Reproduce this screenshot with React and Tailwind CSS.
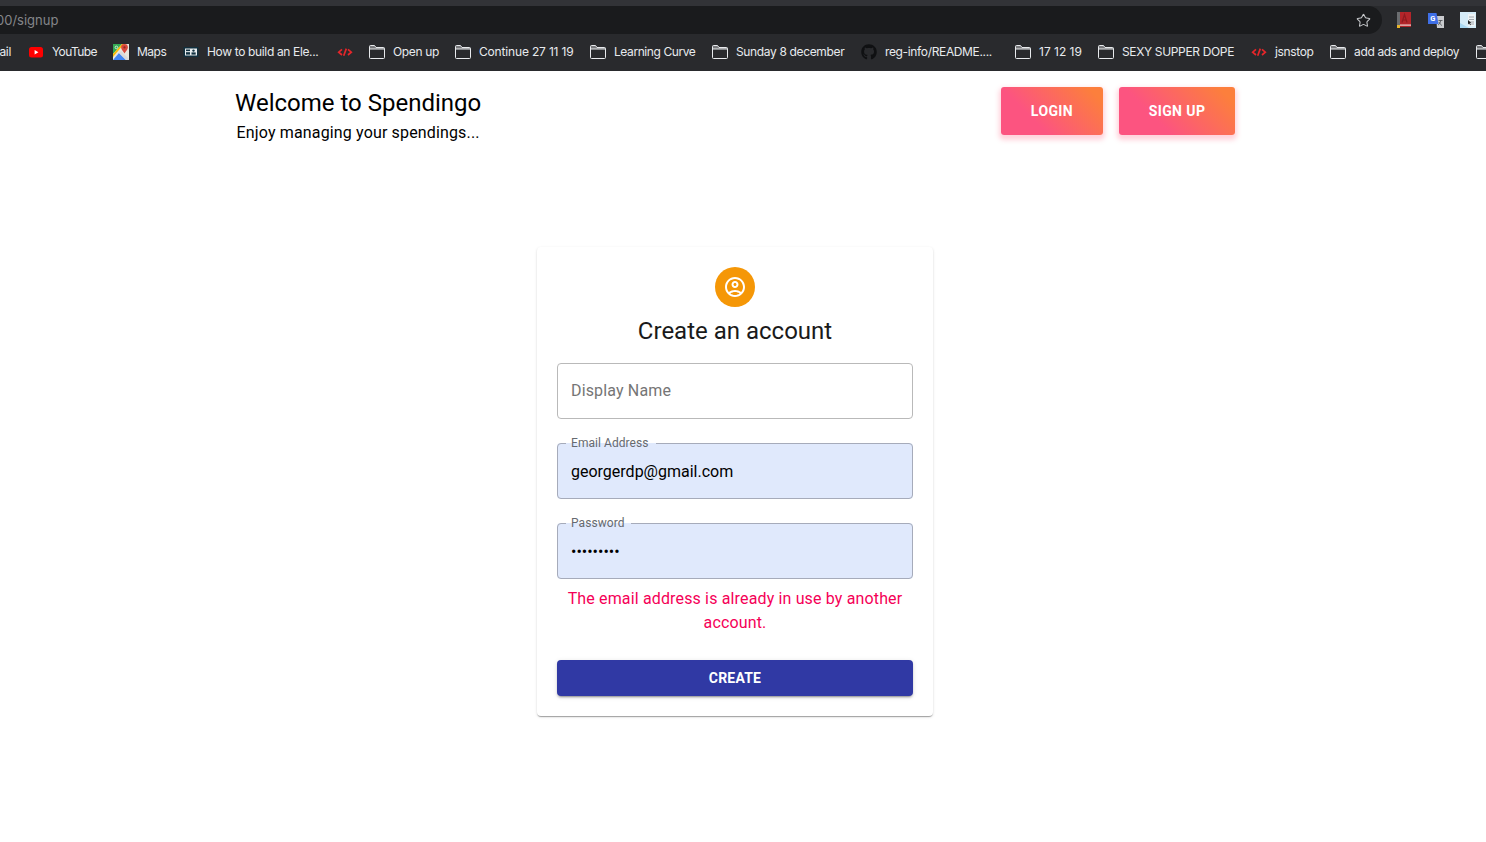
import React from 'react';
import { Star } from 'lucide-react';
import { FaGithub } from 'react-icons/fa';

const FolderIcon = () => (
  <svg width="16" height="14" viewBox="0 0 16 14" className="shrink-0">
    <path d="M.5 4V1.500a1 1 0 0 1 1-1h4l1.500 2h7.500a1 1 0 0 1 1 1V4z" fill="#77787b" />
    <path d="M.5 1.500a1 1 0 0 1 1-1h4l1.500 2h7.500a1 1 0 0 1 1 1v9a1 1 0 0 1-1 1h-13a1 1 0 0 1-1-1zM.5 4h15" fill="none" stroke="#e8eaed" />
  </svg>
);

const CodeIcon = () => (
  <svg width="16" height="16" viewBox="0 0 16 16" fill="none" stroke="#e5262a" strokeWidth="1.7" className="shrink-0">
    <path d="M5 5.300 1.700 8.200 5 11M11 5.300l3.300 2.900L11 11M9.300 4.600 6.700 11.800" />
  </svg>
);

const YoutubeIcon = () => (
  <svg width="16" height="16" viewBox="0 0 16 16" className="shrink-0">
    <rect x="1" y="3" width="14" height="10.500" rx="2.500" fill="#f00" />
    <path d="M6.600 6v4.400L10.400 8.200z" fill="#fff" />
  </svg>
);

const MapsIcon = () => (
  <svg width="16" height="16" viewBox="0 0 16 16" className="shrink-0">
    <rect width="16" height="16" fill="#e8e6df" />
    <path d="M0 0h9L0 10z" fill="#34a853" />
    <path d="M0 10 9 0h2L0 13z" fill="#fbbc04" />
    <path d="M0 16 6 9l7 7z" fill="#4285f4" />
    <path d="M6 9l2-2 8 8v1h-3z" fill="#d9d9d9" />
    <path d="M11.500 0a3.400 3.400 0 0 1 3.400 3.400c0 2.200-2.400 3.600-3.400 6.200-1-2.600-3.400-4-3.400-6.200A3.400 3.400 0 0 1 11.500 0z" fill="#d9483b" />
    <circle cx="11.500" cy="3.400" r="1.100" fill="#8f2a22" />
    <circle cx="3.400" cy="3.400" r="1.300" fill="none" stroke="#fff" strokeWidth=".7" />
  </svg>
);

const ArticleIcon = () => (
  <svg width="16" height="16" viewBox="0 0 16 16" className="shrink-0">
    <rect x="0.500" y="3" width="15" height="10" fill="#12303f" />
    <rect x="2" y="4.500" width="12" height="7" fill="#e9eef0" />
    <rect x="3" y="5.500" width="4" height="1.600" fill="#12303f" />
    <rect x="3" y="8.200" width="4" height="2.400" fill="#12303f" />
    <circle cx="10.500" cy="6.600" r="1.200" fill="#12303f" />
    <rect x="8.500" y="8.400" width="4.200" height="2.200" fill="#12303f" />
  </svg>
);

const GithubIcon = () => <FaGithub className="shrink-0 text-[16px] text-[#0f1012]" />;

const bookmarks = [
  { icon: <YoutubeIcon />, label: 'YouTube', w: 'w-[45px] tracking-[-0.6px]' },
  { icon: <MapsIcon />, label: 'Maps', w: 'w-[30px] tracking-[-0.5px]' },
  { icon: <ArticleIcon />, label: 'How to build an Ele...', w: 'w-[114px]' },
  { icon: <CodeIcon /> },
  { icon: <FolderIcon />, label: 'Open up', w: 'w-[46px]' },
  { icon: <FolderIcon />, label: 'Continue 27 11 19', w: 'w-[95px] tracking-[-0.17px]' },
  { icon: <FolderIcon />, label: 'Learning Curve', w: 'w-[82px] tracking-[-0.42px]' },
  { icon: <FolderIcon />, label: 'Sunday 8 december', w: 'w-[109px]' },
  { icon: <GithubIcon />, label: 'reg-info/README....', w: 'w-[114px]' },
  { icon: <FolderIcon />, label: '17 12 19', w: 'w-[43px] tracking-[0px]' },
  { icon: <FolderIcon />, label: 'SEXY SUPPER DOPE', w: 'w-[113px]' },
  { icon: <CodeIcon />, label: 'jsnstop', w: 'w-[39px]' },
  { icon: <FolderIcon />, label: 'add ads and deploy', w: 'w-[106px]' },
  { icon: <FolderIcon /> },
];

const BrowserChrome = () => (
  <div className="bg-[#292a2d] font-['Inter',sans-serif]">
    <div className="h-[6px] bg-[#323337]" />
    <div className="flex h-[28px] items-center">
      <div className="flex h-full min-w-0 flex-1 items-center justify-between overflow-hidden rounded-r-full bg-[#1a1b1d] pr-[11px]">
        <span className="-ml-[4px] mt-[2px] text-[13px] text-[#85868a]">00/signup</span>
        <Star size={15} strokeWidth={1.7} className="text-[#c4c6c9]" />
      </div>
      <div className="flex w-[104px] items-center gap-[16px] pl-[14px]">
        <svg width="16" height="16" viewBox="0 0 16 16" className="shrink-0">
          <rect x="1" y="0" width="14" height="15" fill="#b3252a" />
          <rect x="1" y="0" width="3" height="15" fill="#6b6d70" />
          <path d="M6 10.500 8.500 2.500 11 10.500M7 8h3" fill="none" stroke="#8e1b20" strokeWidth="1.200" />
          <rect x="4" y="12.500" width="11" height="1.200" fill="#f1d5d5" />
          <rect x="1" y="13" width="3" height="3" fill="#e8b52b" />
        </svg>
        <svg width="16" height="16" viewBox="0 0 16 16" className="shrink-0">
          <path d="M8 4h8v12H9z" fill="#c9cbce" />
          <path d="M10.500 8.500h4M12.500 8v1c0 2-1.500 3.500-2.500 4M11 10c.5 1.500 2 3 3 3.500" fill="none" stroke="#55585c" strokeWidth=".9" />
          <path d="M0 1h8.500l2 11H0z" fill="#3f6fe6" />
          <text x="2.200" y="9" fontSize="7.500" fontWeight="700" fill="#fff" fontFamily="Roboto, sans-serif">G</text>
        </svg>
        <svg width="16" height="16" viewBox="0 0 16 16" className="shrink-0">
          <rect width="16" height="16" fill="#d5ecf8" />
          <path d="M0 11 9 16H0z" fill="#a9d8f2" />
          <rect x="8" y="2" width="7" height="12" fill="#eef3f5" />
          <path d="M9 5h5M9 7.500h5M10 10h4M10 12h4" stroke="#8a9299" strokeWidth=".8" />
          <path d="M8 8v4.500l1.100-1.100 1.100 1.800.7-.4-1.100-1.800h1.500z" fill="#222" />
        </svg>
      </div>
    </div>
    <div className="flex h-[37px] items-center gap-[16px] overflow-hidden pb-[2px] text-[12px] tracking-[-0.35px] text-[#e8eaed]">
      <span className="-ml-[3px] w-[14px] shrink-0 text-right">ail</span>
      <div className="-ml-[-1px] flex items-center gap-[16px]">
        {bookmarks.map((b, i) => (
          <div key={i} className="flex shrink-0 items-center gap-[8px]">
            {b.icon}
            {b.label && <span className={`${b.w} whitespace-nowrap`}>{b.label}</span>}
          </div>
        ))}
      </div>
    </div>
  </div>
);

const GradientButton = ({ children, width }) => (
  <button className={`${width} h-[48px] rounded-[3px] bg-[linear-gradient(45deg,#fc5480_32%,#fc7f3c_90%)] text-[14px] font-bold tracking-[0.4px] text-white shadow-[0_3px_5px_2px_rgba(255,105,135,0.3)]`}>
    {children}
  </button>
);

const Header = () => (
  <div className="flex items-start justify-between pt-[16px]">
    <div className="text-center text-black">
      <h1 className="text-[24px] leading-[32px]">Welcome to Spendingo</h1>
      <p className="text-[16px] leading-[28px] tracking-[0.15px]">Enjoy managing your spendings...</p>
    </div>
    <div className="flex gap-[16px]">
      <GradientButton width="w-[102px]">LOGIN</GradientButton>
      <GradientButton width="w-[116px]">SIGN UP</GradientButton>
    </div>
  </div>
);

const Field = ({ label, notch, type, value, filled }) => (
  <div className="relative h-[56px]">
    <input
      type={type}
      readOnly
      value={value}
      placeholder={label}
      className={`h-full w-full rounded-[4px] px-[14px] text-[16px] text-black outline-none placeholder:tracking-[0.15px] placeholder:text-[#757575] ${filled ? 'bg-[#e0e9fc]' : 'bg-white pb-[2px]'}`}
    />
    {filled ? (
      <fieldset className="pointer-events-none absolute inset-0 -top-[5px] rounded-[4px] border border-[#a6abba] px-[8px]">
        <legend className={`${notch} h-[11px] p-0`} />
      </fieldset>
    ) : (
      <div className="pointer-events-none absolute inset-0 rounded-[4px] border border-[#b9b9b9]" />
    )}
    {filled && <label className="absolute -top-[7px] left-[14px] text-[12px] leading-[14px] tracking-[0.06px] text-[#666a70]">{label}</label>}
  </div>
);

const SignupCard = () => (
  <div className="mx-auto mt-[100px] flex w-[396px] flex-col items-center rounded-[4px] bg-white p-[20px] shadow-[0_2px_1px_-1px_rgba(0,0,0,0.2),0_1px_1px_0_rgba(0,0,0,0.14),0_1px_3px_0_rgba(0,0,0,0.12)]">
    <div className="flex h-[40px] w-[40px] items-center justify-center rounded-full bg-[#f59707]">
      <svg width="24" height="24" viewBox="0 0 24 24" fill="#fff">
        <path d="M12 2C6.480 2 2 6.480 2 12s4.480 10 10 10 10-4.480 10-10S17.520 2 12 2zM7.350 18.500C8.660 17.560 10.260 17 12 17s3.340.56 4.650 1.500C15.340 19.440 13.740 20 12 20s-3.340-.56-4.650-1.500zm10.790-1.380C16.450 15.800 14.320 15 12 15s-4.450.8-6.140 2.120C4.700 15.730 4 13.950 4 12c0-4.420 3.580-8 8-8s8 3.580 8 8c0 1.950-.7 3.730-1.860 5.120z" />
        <path d="M12 6c-1.930 0-3.500 1.570-3.500 3.500S10.070 13 12 13s3.500-1.570 3.500-3.500S13.930 6 12 6zm0 5c-.83 0-1.500-.67-1.500-1.500S11.170 8 12 8s1.500.67 1.500 1.500S12.830 11 12 11z" />
      </svg>
    </div>
    <h2 className="mt-[8px] text-[24px] leading-[32px] text-[#1a1a1a]">Create an account</h2>
    <div className="mt-[16px] flex w-full flex-col gap-[24px]">
      <Field label="Display Name" type="text" value="" />
      <Field label="Email Address" notch="w-[90px]" type="email" value="georgerdp@gmail.com" filled />
      <Field label="Password" notch="w-[65px]" type="password" value="123456789" filled />
    </div>
    <p className="mt-[8px] text-center text-[16px] leading-[24px] tracking-[0.15px] text-[#f50057]">
      The email address is already in use by another account.
    </p>
    <button className="mt-[25px] h-[36px] w-full rounded-[4px] bg-[#3039a4] text-[14px] font-bold tracking-[0.2px] text-white shadow-[0_3px_1px_-2px_rgba(0,0,0,0.2),0_2px_2px_0_rgba(0,0,0,0.14),0_1px_5px_0_rgba(0,0,0,0.12)]">
      CREATE
    </button>
  </div>
);

export default function App() {
  return (
    <div className="h-screen overflow-hidden bg-white font-['Roboto',sans-serif]">
      <BrowserChrome />
      <div className="w-[1470px]">
        <div className="mx-auto w-[1000px]">
          <Header />
        </div>
        <SignupCard />
      </div>
    </div>
  );
}
